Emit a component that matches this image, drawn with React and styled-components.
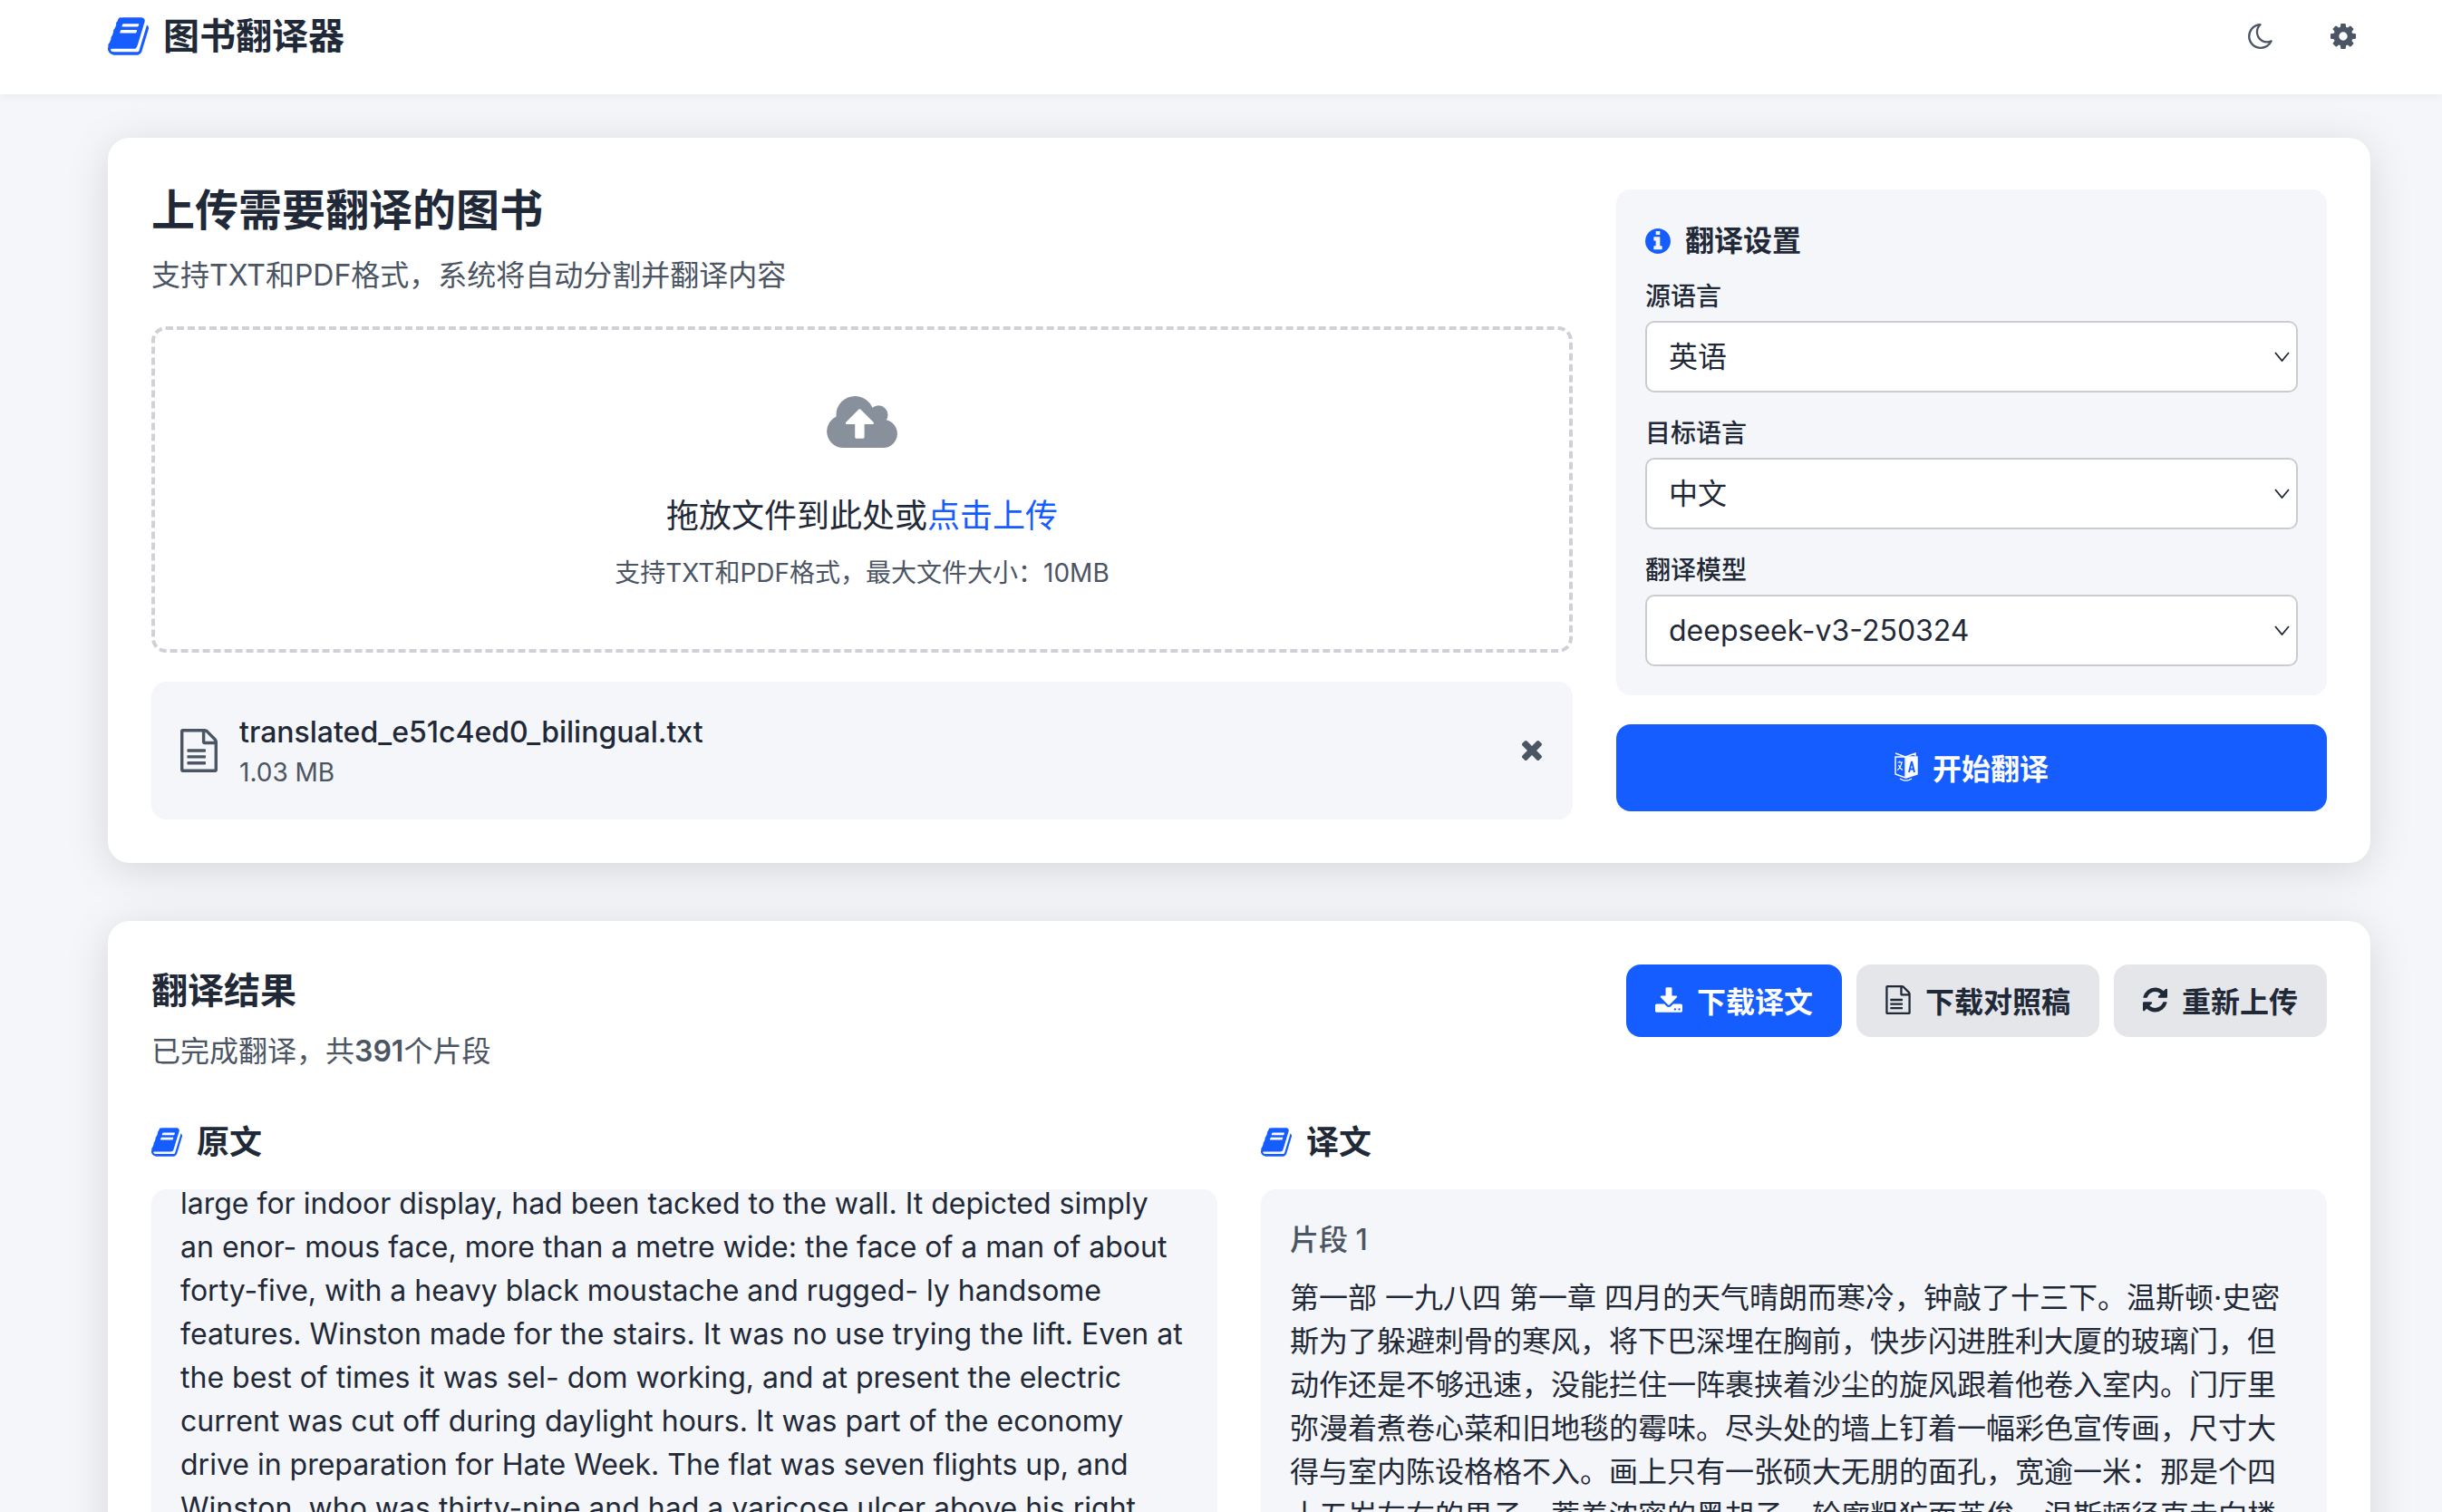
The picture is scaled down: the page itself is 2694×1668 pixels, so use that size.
import React from "react";
import styled, { createGlobalStyle } from "styled-components";

const BLUE = "#165dff";
const DARK = "#1f2937";
const GRAY = "#4b5563";
const SOFT = "#f5f6fa";

const ICONS = {
  book: {
    box: "0 128 1664 1536",
    d: "M1639 478q40 57 18 129l-275 906q-19 64-76.5 107.5t-122.5 43.5h-923q-77 0-148.5-53.5t-99.5-131.5q-24-67-2-127 0-4 3-27t4-37q1-8-3-21.5t-3-19.5q2-11 8-21t16.5-23.5 16.5-23.5q23-38 45-91.5t30-91.5q3-10 .5-30t-.5-28q3-11 17-28t17-23q21-36 42-92t25-90q1-9-2.5-32t.5-28q4-13 22-30.5t22-22.5q19-26 42.5-84.5t27.5-96.5q1-8-3-25.5t-2-26.5q2-8 9-18t18-23 17-21q8-12 16.5-30.5t15-35 16-36 19.5-32 26.5-23.5 36-11.5 47.5 5.5l-1 3q38-9 51-9h761q74 0 114 56t18 130l-274 906q-36 119-71.5 153.5t-128.5 34.5h-869q-27 0-38 15-11 16-1 43 24 70 144 70h923q29 0 56-15.5t35-41.5l300-987q7-22 5-57 38 15 59 43zm-1064 2q-4 13 2 22.5t20 9.5h608q13 0 25.5-9.5t16.5-22.5l21-64q4-13-2-22.5t-20-9.5h-608q-13 0-25.5 9.5t-16.5 22.5zm-83 256q-4 13 2 22.5t20 9.5h608q13 0 25.5-9.5t16.5-22.5l21-64q4-13-2-22.5t-20-9.5h-608q-13 0-25.5 9.5t-16.5 22.5z",
  },
  moon: {
    box: "128 128 1480 1536",
    d: "M1390 1303q-54 9-110 9-182 0-337-90t-245-245-90-337q0-192 104-357-201 60-328.5 229t-127.5 384q0 130 51 248.5t136.5 204 204 136.5 248.5 51q144 0 273.5-61.5t220.5-171.5zm203-85q-94 203-283.5 324.5t-413.5 121.5q-156 0-298-61t-245-164-164-245-61-298q0-153 57.5-292.5t156-241.5 235.5-164.5 290-68.5q44-2 61 39 18 41-15 72-86 78-131.5 181.5t-45.5 218.5q0 148 73 273t198 198 273 73q118 0 228-51 41-18 72 13 14 14 17.5 34t-4.5 38z",
  },
  cog: {
    box: "128 128 1536 1536",
    d: "M1152 896q0-106-75-181t-181-75-181 75-75 181 75 181 181 75 181-75 75-181zm512-109v222q0 12-8 23t-20 13l-185 28q-19 54-39 91 35 50 107 138 10 12 10 25t-9 23q-27 37-99 108t-94 71q-12 0-26-9l-138-108q-44 23-91 38-16 136-29 186-7 28-36 28h-222q-14 0-24.5-8.5t-11.5-21.5l-28-184q-49-16-90-37l-141 107q-10 9-25 9-14 0-25-11-126-114-165-168-7-10-7-23 0-12 8-23 15-21 51-66.5t54-70.5q-27-50-41-99l-183-27q-13-2-21-12.5t-8-23.5v-222q0-12 8-23t19-13l186-28q14-46 39-92-40-57-107-138-10-12-10-24 0-10 9-23 26-36 98.5-107.5t94.5-71.5q13 0 26 10l138 107q44-23 91-38 16-136 29-186 7-28 36-28h222q14 0 24.5 8.5t11.5 21.5l28 184q49 16 90 37l142-107q9-9 24-9 13 0 25 10 129 119 165 170 7 8 7 22 0 12-8 23-15 21-51 66.5t-54 70.5q26 50 41 98l183 28q13 2 21 12.5t8 23.5z",
  },
  times: {
    box: "302 366 1188 1188",
    d: "M1490 1322q0 40-28 68l-136 136q-28 28-68 28t-68-28l-294-294-294 294q-28 28-68 28t-68-28l-136-136q-28-28-28-68t28-68l294-294-294-294q-28-28-28-68t28-68l136-136q28-28 68-28t68 28l294 294 294-294q28-28 68-28t68 28l136 136q28 28 28 68t-28 68l-294 294 294 294q28 28 28 68z",
  },
  info: {
    box: "128 128 1536 1536",
    d: "M1152 1376v-160q0-14-9-23t-23-9h-96v-512q0-14-9-23t-23-9h-320q-14 0-23 9t-9 23v160q0 14 9 23t23 9h96v320h-96q-14 0-23 9t-9 23v160q0 14 9 23t23 9h448q14 0 23-9t9-23zm-128-896v-160q0-14-9-23t-23-9h-192q-14 0-23 9t-9 23v160q0 14 9 23t23 9h192q14 0 23-9t9-23zm640 416q0 209-103 385.5t-279.5 279.5-385.5 103-385.5-103-279.5-279.5-103-385.5 103-385.5 279.5-279.5 385.5-103 385.5 103 279.5 279.5 103 385.5z",
  },
  refresh: {
    box: "128 128 1536 1536",
    d: "M1639 1056q0 5-1 7-64 268-268 434.5t-478 166.5q-146 0-282.5-55t-243.5-157l-129 129q-19 19-45 19t-45-19-19-45v-448q0-26 19-45t45-19h448q26 0 45 19t19 45-19 45l-137 137q71 66 161 102t187 36q134 0 250-65t186-179q11-17 53-117 8-23 30-23h192q13 0 22.5 9.5t9.5 22.5zm25-800v448q0 26-19 45t-45 19h-448q-26 0-45-19t-19-45 19-45l138-138q-148-137-349-137-134 0-250 65t-186 179q-11 17-53 117-8 23-30 23h-199q-13 0-22.5-9.5t-9.5-22.5v-7q65-268 270-434.5t480-166.5q146 0 284 55.5t245 156.5l130-129q19-19 45-19t45 19 19 45z",
  },
  download: {
    box: "64 0 1664 1536",
    d: "M1344 1344q0-26-19-45t-45-19-45 19-19 45 19 45 45 19 45-19 19-45zm256 0q0-26-19-45t-45-19-45 19-19 45 19 45 45 19 45-19 19-45zm128-224v320q0 40-28 68t-68 28h-1472q-40 0-68-28t-28-68v-320q0-40 28-68t68-28h465l135 136q58 56 136 56t136-56l136-136h464q40 0 68 28t28 68zm-325-569q17 41-14 70l-448 448q-18 19-45 19t-45-19l-448-448q-31-29-14-70 17-39 59-39h256v-448q0-26 19-45t45-19h256q26 0 45 19t19 45v448h256q42 0 59 39z",
  },
  cloud: {
    box: "-64 128 1920 1408",
    d: "M1216 864q0-14-9-23l-352-352q-9-9-23-9t-23 9l-351 351q-10 12-10 24 0 14 9 23t23 9h224v352q0 13 9.5 22.5t22.5 9.5h192q13 0 22.5-9.5t9.5-22.5v-352h224q13 0 22.5-9.5t9.5-22.5zm640 288q0 159-112.5 271.5t-271.5 112.5h-1088q-185 0-316.5-131.5t-131.5-316.5q0-130 70-240t188-165q-2-30-2-43 0-212 150-362t362-150q156 0 285.5 87t188.5 231q71-62 166-62 106 0 181 75t75 181q0 76-41 138 130 31 213.5 135.5t83.5 238.5z",
  },
  file: {
    box: "128 0 1536 1792",
    d: "M1596 380q28 28 48 76t20 88v1152q0 40-28 68t-68 28h-1344q-40 0-68-28t-28-68v-1600q0-40 28-68t68-28h896q40 0 88 20t76 48zm-444-244v376h376q-10-29-22-41l-313-313q-12-12-41-22zm384 1528v-1024h-416q-40 0-68-28t-28-68v-416h-768v1536h1280zm-1128-800q0-14 9-23t23-9h704q14 0 23 9t9 23v64q0 14-9 23t-23 9h-704q-14 0-23-9t-9-23v-64zm736 224q14 0 23 9t9 23v64q0 14-9 23t-23 9h-704q-14 0-23-9t-9-23v-64q0-14 9-23t23-9h704zm0 256q14 0 23 9t9 23v64q0 14-9 23t-23 9h-704q-14 0-23-9t-9-23v-64q0-14 9-23t23-9h704z",
  },
};

const GlobalStyle = createGlobalStyle`
  html, body {
    margin: 0;
    height: 100%;
    overflow: hidden;
    background: ${SOFT};
    color: ${DARK};
    font-family: Inter, "Noto Sans CJK SC", sans-serif;
  }
  * {
    box-sizing: border-box;
  }
`;

const Glyph = styled.svg`
  display: block;
  flex: none;
  width: ${(p) => p.$w}px;
  height: ${(p) => p.$h}px;
  fill: currentColor;
  color: ${(p) => p.$color || "inherit"};
`;

const Icon = ({ name, w, h, color }) => (
  <Glyph viewBox={ICONS[name].box} $w={w} $h={h} $color={color}>
    <path d={ICONS[name].d} />
  </Glyph>
);

const Header = styled.header`
  height: 104px;
  padding: 0 79px 24px 119px;
  display: flex;
  align-items: center;
  justify-content: space-between;
  background: #fff;
  box-shadow: 0 2px 10px rgba(0, 0, 0, 0.05);
  position: relative;
`;

const Brand = styled.div`
  display: flex;
  align-items: center;
  gap: 16px;
  font-size: 40px;
  font-weight: 600;
  line-height: 60px;
`;

const HeaderTools = styled.div`
  display: flex;
  gap: 32px;
`;

const ToolButton = styled.button`
  width: 60px;
  height: 60px;
  padding: 0;
  border: 0;
  background: none;
  color: ${GRAY};
  display: flex;
  align-items: center;
  justify-content: center;
`;

const Main = styled.main`
  padding: 48px 79px 0 119px;
  display: flex;
  flex-direction: column;
  gap: 64px;
`;

const Card = styled.section`
  background: #fff;
  border-radius: 24px;
  padding: 48px;
  box-shadow: 0 8px 48px rgba(0, 0, 0, 0.13);
`;

const UploadGrid = styled.div`
  display: grid;
  grid-template-columns: 2fr 1fr;
  gap: 48px;
  align-items: center;
`;

const Title = styled.h1`
  margin: 0;
  font-size: 48px;
  line-height: 64px;
  font-weight: 700;
`;

const Muted = styled.p`
  margin: 17px 0 33px;
  font-size: 32px;
  line-height: 46px;
  color: ${GRAY};
`;

const DropZone = styled.div`
  height: 360px;
  padding-top: 73px;
  border: 4px dashed #cfd1d6;
  border-radius: 16px;
  display: flex;
  flex-direction: column;
  align-items: center;
`;

const DropText = styled.div`
  margin-top: 48px;
  font-size: 36px;
  line-height: 54px;
`;

const DropLink = styled.span`
  color: ${BLUE};
`;

const DropHint = styled.div`
  margin-top: 15px;
  font-size: 28px;
  line-height: 42px;
  color: ${GRAY};
`;

const FileRow = styled.div`
  margin-top: 32px;
  padding: 32px 34px 32px 32px;
  display: flex;
  align-items: center;
  gap: 24px;
  background: ${SOFT};
  border-radius: 16px;
`;

const FileInfo = styled.div`
  flex: 1;
`;

const FileName = styled.div`
  font-size: 32px;
  line-height: 48px;
  font-weight: 500;
`;

const FileSize = styled.div`
  font-size: 28px;
  line-height: 40px;
  color: ${GRAY};
`;

const SideColumn = styled.aside`
  display: flex;
  flex-direction: column;
  gap: 32px;
`;

const SettingsPanel = styled.div`
  padding: 32px;
  background: ${SOFT};
  border-radius: 16px;
`;

const SettingsTitle = styled.div`
  display: flex;
  align-items: center;
  gap: 16px;
  font-size: 32px;
  line-height: 50px;
  font-weight: 600;
  margin-bottom: 15px;
`;

const Field = styled.div`
  & + & {
    margin-top: 24px;
  }
`;

const FieldLabel = styled.label`
  display: block;
  margin-bottom: 6px;
  font-size: 28px;
  line-height: 42px;
  font-weight: 500;
`;

const SelectWrap = styled.div`
  position: relative;
  color: ${DARK};
  svg {
    position: absolute;
    right: 9px;
    top: 34px;
    pointer-events: none;
  }
`;

const Select = styled.select`
  display: block;
  width: 100%;
  height: 79px;
  padding: 0 24px;
  appearance: none;
  background: #fff;
  border: 2px solid #cbccd1;
  border-radius: 10px;
  color: ${DARK};
  font: inherit;
  font-size: 32px;
`;

const StartButton = styled.button`
  height: 96px;
  padding: 0 0 3px;
  border: 0;
  border-radius: 16px;
  background: ${BLUE};
  color: #fff;
  font: inherit;
  font-size: 32px;
  font-weight: 600;
  display: flex;
  align-items: center;
  justify-content: center;
  gap: 16px;
`;

const ResultHead = styled.div`
  display: flex;
  justify-content: space-between;
  align-items: flex-start;
`;

const ResultTitle = styled.h2`
  margin: 0;
  font-size: 40px;
  line-height: 58px;
  font-weight: 700;
`;

const ResultMeta = styled.p`
  margin: 15px 0 0;
  font-size: 32px;
  line-height: 46px;
  color: ${GRAY};
`;

const MetaCount = styled.span`
  font-weight: 600;
`;

const Actions = styled.div`
  display: flex;
  gap: 16px;
`;

const ActionButton = styled.button`
  height: 80px;
  padding: 0 32px 2px;
  border: 0;
  border-radius: 16px;
  background: ${(p) => (p.$primary ? BLUE : "#e5e6ea")};
  color: ${(p) => (p.$primary ? "#fff" : DARK)};
  font: inherit;
  font-size: 32px;
  font-weight: 600;
  display: flex;
  align-items: center;
  gap: 16px;
`;

const Columns = styled.div`
  margin-top: 50px;
  display: grid;
  grid-template-columns: 1fr 1fr;
  gap: 48px;
`;

const ColumnTitle = styled.h3`
  margin: 0 0 25px;
  display: flex;
  align-items: center;
  gap: 16px;
  font-size: 36px;
  line-height: 54px;
  font-weight: 600;
`;

const TextBox = styled.div`
  height: 560px;
  overflow: hidden;
  padding: ${(p) => (p.$scrolled ? "0 32px" : "32px")};
  background: ${SOFT};
  border-radius: 16px;
  font-size: 32px;
  line-height: 48px;
`;

const ScrolledText = styled.div`
  margin-top: -8px;
`;

const SegmentLabel = styled.div`
  margin-bottom: 16px;
  color: ${GRAY};
  font-weight: 500;
`;

const TranslateIcon = () => (
  <svg width="26" height="32" viewBox="0 0 26 32" fill="none" stroke="#fff" strokeWidth="1.4">
    <path d="M1 1l11 4 11-4v3" />
    <path d="M1 5h11v23L1 24z" />
    <path d="M13 5h12v19l-12 4z" fill="#fff" />
    <path d="M16 22l3-12 3 12M17 18.500h4" stroke={BLUE} strokeWidth="1.900" />
    <path d="M3.500 11h5.500M5.800 9.500V11M8 11c-.8 4-2.500 7-5 8.500M4.500 14c1 2.500 2.500 4.500 4.500 5.500" strokeWidth="1.200" />
    <path d="M6 29c4 2.600 9 2.600 13 0" />
  </svg>
);

const settings = [
  { label: "源语言", value: "英语" },
  { label: "目标语言", value: "中文" },
  { label: "翻译模型", value: "deepseek-v3-250324" },
];

const source =
  "large for indoor display, had been tacked to the wall. It depicted simply an enor- mous face, more than a metre wide: the face of a man of about forty-five, with a heavy black moustache and rugged- ly handsome features. Winston made for the stairs. It was no use trying the lift. Even at the best of times it was sel- dom working, and at present the electric current was cut off during daylight hours. It was part of the economy drive in preparation for Hate Week. The flat was seven flights up, and Winston, who was thirty-nine and had a varicose ulcer above his right knee, went slowly.";

const translated =
  "第一部 一九八四 第一章 四月的天气晴朗而寒冷，钟敲了十三下。温斯顿·史密斯为了躲避刺骨的寒风，将下巴深埋在胸前，快步闪进胜利大厦的玻璃门，但动作还是不够迅速，没能拦住一阵裹挟着沙尘的旋风跟着他卷入室内。门厅里弥漫着煮卷心菜和旧地毯的霉味。尽头处的墙上钉着一幅彩色宣传画，尺寸大得与室内陈设格格不入。画上只有一张硕大无朋的面孔，宽逾一米：那是个四十五岁左右的男子，蓄着浓密的黑胡子，轮廓粗犷而英俊。温斯顿径直走向楼梯。";

const App = () => (
  <>
    <GlobalStyle />
    <Header>
      <Brand>
        <Icon name="book" w={45} h={42} color={BLUE} />
        图书翻译器
      </Brand>
      <HeaderTools>
        <ToolButton>
          <Icon name="moon" w={27} h={28} />
        </ToolButton>
        <ToolButton>
          <Icon name="cog" w={28} h={28} />
        </ToolButton>
      </HeaderTools>
    </Header>
    <Main>
      <Card>
        <UploadGrid>
          <div>
            <Title>上传需要翻译的图书</Title>
            <Muted>支持TXT和PDF格式，系统将自动分割并翻译内容</Muted>
            <DropZone>
              <Icon name="cloud" w={78} h={57} color="#88909c" />
              <DropText>
                拖放文件到此处或<DropLink>点击上传</DropLink>
              </DropText>
              <DropHint>支持TXT和PDF格式，最大文件大小：10MB</DropHint>
            </DropZone>
            <FileRow>
              <Icon name="file" w={41} h={48} color={GRAY} />
              <FileInfo>
                <FileName>translated_e51c4ed0_bilingual.txt</FileName>
                <FileSize>1.03 MB</FileSize>
              </FileInfo>
              <Icon name="times" w={22} h={22} color={GRAY} />
            </FileRow>
          </div>
          <SideColumn>
            <SettingsPanel>
              <SettingsTitle>
                <Icon name="info" w={28} h={28} color={BLUE} />
                翻译设置
              </SettingsTitle>
              {settings.map((item) => (
                <Field key={item.label}>
                  <FieldLabel>{item.label}</FieldLabel>
                  <SelectWrap>
                    <Select defaultValue={item.value}>
                      <option>{item.value}</option>
                    </Select>
                    <svg width="17" height="11" viewBox="0 0 17 11" fill="none" stroke="currentColor" strokeWidth="1.800">
                      <path d="M1 1l7.500 9L16 1" />
                    </svg>
                  </SelectWrap>
                </Field>
              ))}
            </SettingsPanel>
            <StartButton>
              <TranslateIcon />
              开始翻译
            </StartButton>
          </SideColumn>
        </UploadGrid>
      </Card>
      <Card>
        <ResultHead>
          <div>
            <ResultTitle>翻译结果</ResultTitle>
            <ResultMeta>
              已完成翻译，共<MetaCount>391</MetaCount>个片段
            </ResultMeta>
          </div>
          <Actions>
            <ActionButton $primary>
              <Icon name="download" w={30} h={28} />
              下载译文
            </ActionButton>
            <ActionButton>
              <Icon name="file" w={28} h={32} />
              下载对照稿
            </ActionButton>
            <ActionButton>
              <Icon name="refresh" w={27} h={28} />
              重新上传
            </ActionButton>
          </Actions>
        </ResultHead>
        <Columns>
          <div>
            <ColumnTitle>
              <Icon name="book" w={34} h={32} color={BLUE} />
              原文
            </ColumnTitle>
            <TextBox $scrolled>
              <ScrolledText>{source}</ScrolledText>
            </TextBox>
          </div>
          <div>
            <ColumnTitle>
              <Icon name="book" w={34} h={32} color={BLUE} />
              译文
            </ColumnTitle>
            <TextBox>
              <SegmentLabel>片段 1</SegmentLabel>
              <div>{translated}</div>
            </TextBox>
          </div>
        </Columns>
      </Card>
    </Main>
  </>
);

export default App;
